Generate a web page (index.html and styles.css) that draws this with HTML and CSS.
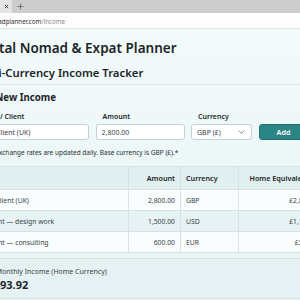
FILE: index.html
```html
<!DOCTYPE html>
<html lang="en">
<head>
<meta charset="utf-8">
<title>Income Tracker</title>
<link rel="stylesheet" href="styles.css">
</head>
<body>
<div class="chrome">
  <div class="tabs">
    <div class="tab"><svg class="tab-x" viewBox="0 0 6 6" width="5" height="5"><path d="M1 1l4 4M5 1l-4 4" stroke="#333" stroke-width="1"/></svg></div>
    <svg class="tab-plus" viewBox="0 0 8 8" width="7" height="7"><path d="M4 0.5v7M0.5 4h7" stroke="#666" stroke-width="0.9"/></svg>
  </div>
  <div class="urlbar">
    <span class="host">nomadplanner.com</span><span class="path">/income</span>
  </div>
</div>
<main class="page">
  <div class="content">
    <h1 class="title">Digital Nomad &amp; Expat Planner</h1>
    <h2 class="subtitle">Multi-Currency Income Tracker</h2>
    <section class="section">
      <h3 class="section-title">Add New Income</h3>
      <form class="form-row">
        <label class="field">
          <span class="field-label">Source / Client</span>
          <input class="input" type="text" value="Acme Client (UK)">
        </label>
        <label class="field">
          <span class="field-label">Amount</span>
          <input class="input" type="text" value="2,800.00">
        </label>
        <label class="field">
          <span class="field-label">Currency</span>
          <span class="select">GBP (£)<svg class="chev" viewBox="0 0 10 6" width="7" height="4"><path d="M1 1l4 4 4-4" fill="none" stroke="#6b7375" stroke-width="1.3"/></svg></span>
        </label>
        <div class="field field-btn">
          <button class="btn" type="button">Add</button>
        </div>
      </form>
      <p class="note">Note: Exchange rates are updated daily. Base currency is GBP (£).*</p>
      <table class="table">
        <colgroup>
          <col class="w-src"><col class="w-amt"><col class="w-cur"><col class="w-home">
        </colgroup>
        <thead>
          <tr><th>Source</th><th class="num">Amount</th><th>Currency</th><th class="num">Home Equivalent (£)</th></tr>
        </thead>
        <tbody>
          <tr><td>Acme Client (UK)</td><td class="num">2,800.00</td><td>GBP</td><td class="num">£2,800.00</td></tr>
          <tr><td>US Client — design work</td><td class="num">1,500.00</td><td>USD</td><td class="num">£1,180.50</td></tr>
          <tr><td>EU Client — consulting</td><td class="num">600.00</td><td>EUR</td><td class="num">£513.42</td></tr>
        </tbody>
      </table>
    </section>
    <section class="summary">
      <div class="summary-label">Total Monthly Income (Home Currency)</div>
      <div class="summary-value">£4,493.92</div>
    </section>
  </div>
</main>
</body>
</html>
```

FILE: styles.css
```css
* { box-sizing: border-box; }
html, body { margin: 0; padding: 0; }
body {
  width: 300px;
  height: 300px;
  overflow: hidden;
  font-family: "Noto Sans", "Open Sans", sans-serif;
  color: #1c2629;
  background: #eef7f8;
}
.tabs {
  height: 13px;
  background: #cdcdcd;
  display: flex;
  align-items: center;
}
.tab {
  width: 12px;
  height: 13px;
  background: #e4e4e4;
  display: flex;
  align-items: center;
  justify-content: center;
}
.tab-x { display: block; }
.tab-plus { display: block; margin-left: 5px; }
.urlbar {
  height: 16px;
  display: flex;
  align-items: center;
  font-size: 6.2px;
  background: #fdfdfd;
  border-bottom: 1px solid #e4e6e6;
  margin-left: -15px;
  padding-top: 1px;
}
.host { color: #2f2f2f; }
.path { color: #8c8c8c; }
.page {
  background: linear-gradient(#f2fafa, #e9f4f5);
  height: 271px;
  overflow: hidden;
}
.content { margin-left: -23px; width: 400px; padding-top: 10px; }
.title { margin: 0 0 0 -4px; font-size: 13.5px; font-weight: 600; line-height: 18px; }
.subtitle { margin: 8px 0 0 -4px; font-size: 11.3px; font-weight: 600; line-height: 16px; }
.section { border-top: 1px solid #dde9ea; margin-top: 3px; padding-top: 6px; }
.section-title { margin: 0 0 0 -3px; font-size: 9.7px; font-weight: 700; line-height: 14px; }
.form-row {
  display: grid;
  grid-template-columns: 119px 89px 61px 50px;
  column-gap: 6.5px;
  margin: 7px 0 0 -7px;
}
.field { display: flex; flex-direction: column; }
.field-btn { justify-content: flex-end; }
.field-label { font-size: 7px; font-weight: 600; line-height: 10px; margin: 0 0 2px 7px; }
.field:first-child .field-label { margin-left: 5px; }
.input, .select {
  height: 16px;
  border: 1px solid #c4d0d2;
  border-radius: 3px;
  background: #fff;
  font-family: inherit;
  font-size: 7px;
  color: #3b4447;
  padding: 0 5px;
  margin: 0;
}
.select { display: flex; align-items: center; justify-content: space-between; padding: 0 6px 0 5px; }
.btn {
  height: 16px;
  border: 1px solid #237272;
  border-radius: 3px;
  background: #2c8585;
  color: #fff;
  font-family: inherit;
  font-size: 7.2px;
  font-weight: 600;
  padding: 0;
}
.note { margin: 8px 0 0; font-size: 6.5px; line-height: 10px; color: #273033; }
.table {
  margin: 8px 0 0 -7px;
  border-collapse: collapse;
  table-layout: fixed;
  width: 355px;
  font-size: 6.8px;
}
.w-src { width: 158px; }
.w-amt { width: 52px; }
.w-cur { width: 58px; }
.w-home { width: 87px; }
.table th, .table td {
  border: 1px solid #d5e3e4;
  padding: 0 5px;
  text-align: left;
  white-space: nowrap;
  overflow: hidden;
}
.table th { height: 23px; background: #e2eff0; font-weight: 600; font-size: 7.2px; color: #1c2629; }
.table td { height: 21px; color: #3a4346; }
.table tbody tr:nth-child(odd) { background: #f9fdfd; }
.table tbody tr:nth-child(even) { background: #e6f2f3; }
.table .num { text-align: right; }
.summary {
  margin: 5px 0 0 -7px;
  border-top: 1px solid #d3e2e3;
  border-bottom: 1px solid #d3e2e3;
  background: #e5f1f2;
  padding: 8px 0 6px 8px;
}
.summary-label { font-size: 7px; color: #3a4346; line-height: 10px; }
.summary-value { font-size: 11px; font-weight: 700; line-height: 14px; margin-top: 1px; }
```
